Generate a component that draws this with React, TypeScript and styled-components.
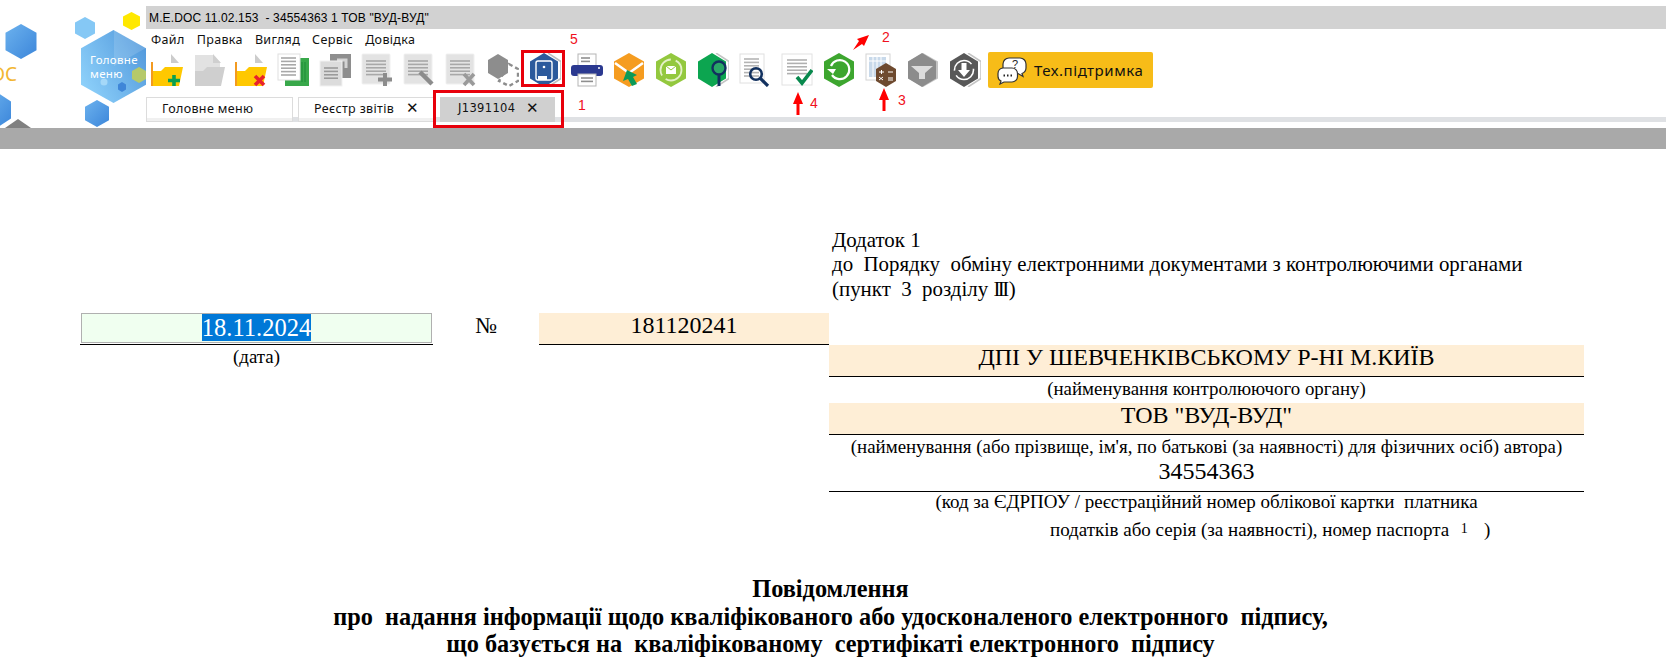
import React from "react";
import styled, { createGlobalStyle } from "styled-components";

const GlobalStyle = createGlobalStyle`
  html, body {
    margin: 0;
    padding: 0;
    background: #fff;
    overflow: hidden;
  }
`;

const Page = styled.div`
  width: 1666px;
  height: 658px;
  overflow: hidden;
  position: relative;
  font-family: "Liberation Serif", serif;
  color: #000;
`;

const Header = styled.header`
  display: flex;
  height: 128px;
`;

const LogoArea = styled.svg`
  width: 146px;
  height: 128px;
  flex: none;
`;

const Shell = styled.div`
  flex: 1;
  padding-top: 6px;
  position: relative;
`;

const TitleBar = styled.div`
  height: 23px;
  background: #d2d2d2;
  padding-left: 3px;
  font: 12px/24px "Liberation Sans", sans-serif;
  letter-spacing: 0.14px;
  white-space: pre;
`;

const MenuBar = styled.nav`
  display: flex;
  gap: 12px;
  height: 23px;
  padding-left: 5px;
  font: 12.5px/21px "Noto Sans", sans-serif;
  letter-spacing: 0.35px;
  color: #111;
`;

const Toolbar = styled.div`
  display: flex;
  align-items: center;
  height: 36px;
  padding-left: 5px;
  gap: 10px;
`;

const ToolIcon = styled.svg`
  display: block;
  width: 32px;
  height: 34px;
  flex: none;
`;

const MarkedSlot = styled.div`
  position: relative;
  flex: none;

  &::after {
    content: "";
    position: absolute;
    left: -8px;
    right: -4px;
    top: -3px;
    bottom: 0;
    border: 3px solid #e8000b;
  }
`;

const SupportButton = styled.button`
  display: flex;
  align-items: center;
  gap: 7px;
  width: 165px;
  height: 36px;
  margin-left: -3px;
  padding: 0 0 0 9px;
  border: 0;
  border-radius: 2px;
  background: #f7bc18;
  font: 15px "Noto Sans", sans-serif;
  letter-spacing: 0.55px;
  color: #111;
`;

const TabRow = styled.div`
  display: flex;
  height: 25px;
  margin-top: 9px;
  background: linear-gradient(#fff 20px, #dfe1e4 20px);
`;

const Tab = styled.div<{ $width: number; $pad: number }>`
  display: flex;
  align-items: center;
  box-sizing: border-box;
  width: ${(p) => p.$width}px;
  margin-right: 5px;
  padding: 0 0 3px ${(p) => p.$pad}px;
  border: 1px solid #dcdcdc;
  background: linear-gradient(#fff 20px, #f0f0f0 20px);
  font: 12.5px "Noto Sans", sans-serif;
  letter-spacing: 0.35px;
  color: #111;
`;

const ActiveTab = styled(Tab)`
  position: relative;
  margin-left: 1px;
  border-color: #d0d0d0;
  background: #d0d0d0;
  font: 11.5px "DejaVu Sans", sans-serif;

  &::after {
    content: "";
    position: absolute;
    left: -8px;
    right: -10px;
    top: -8px;
    bottom: -7px;
    border: 3px solid #e8000b;
  }
`;

const TabClose = styled.span<{ $gap: number }>`
  margin-left: ${(p) => p.$gap}px;
  font: 15px "Liberation Sans", sans-serif;
`;

const Note = styled.span<{ $x: number; $y: number }>`
  position: absolute;
  left: ${(p) => p.$x}px;
  top: ${(p) => p.$y}px;
  font: 14px "Liberation Sans", sans-serif;
  color: #f01020;
`;

const Arrow = styled.svg<{ $x: number; $y: number }>`
  position: absolute;
  left: ${(p) => p.$x}px;
  top: ${(p) => p.$y}px;
`;

const GrayBand = styled.div`
  height: 21px;
  background: #a9a9a9;
`;

const Sheet = styled.main`
  padding: 79px 0 0 80px;
`;

const Annex = styled.div`
  margin-left: 752px;
  height: 85px;
  font-size: 20.9px;
  line-height: 24.4px;
  white-space: pre;
`;

const Roman = styled.span`
  letter-spacing: -2.5px;
  margin-right: 2px;
`;

const FormGrid = styled.div`
  display: grid;
  grid-template-columns: 353px 106px 290px 755px;
  grid-template-rows: 32px auto;
`;

const DateCell = styled.div`
  box-sizing: border-box;
  height: 32px;
  border-bottom: 1px solid #000;
  padding: 0 1px 1px;
`;

const DateInput = styled.div`
  box-sizing: border-box;
  height: 30px;
  border: 1px solid #b0b0b0;
  background: #f0fff0;
  text-align: center;
  font-size: 24.5px;
  line-height: 27px;
`;

const Selected = styled.span`
  display: inline-block;
  background: #0078d7;
  color: #fff;
`;

const NumberSign = styled.div`
  text-align: center;
  font-size: 23px;
  line-height: 26px;
`;

const FilledValue = styled.div`
  box-sizing: border-box;
  height: 32px;
  border-bottom: 1px solid #000;
  background: #feeed6;
  text-align: center;
  font-size: 24px;
  line-height: 24px;
`;

const BlankValue = styled(FilledValue)`
  height: 31px;
  background: #fff;
  line-height: 20px;
`;

const Caption = styled.div`
  text-align: center;
  font-size: 18.9px;
  line-height: 24px;
  white-space: pre;
`;

const Authority = styled.div`
  grid-column: 4;
`;

const SmallCaption = styled(Caption)`
  height: 26px;
  line-height: 23px;
`;

const CodeCaption = styled(Caption)`
  font-size: 19px;
  line-height: 20px;
`;

const PassportLine = styled(Caption)`
  margin-top: 5px;
  padding-left: 221px;
  text-align: left;
  font-size: 19px;
`;

const Footnote = styled.span`
  font-size: 14px;
  vertical-align: 3px;
  margin: 0 2px;
`;

const Heading = styled.h1`
  margin: 33px 0 0 -80px;
  width: 1666px;
  padding-right: 5px;
  box-sizing: border-box;
  text-align: center;
  font-size: 24.3px;
  font-weight: bold;
  line-height: 27.5px;
  white-space: pre;
`;

const Hex = ({ fill, points = "16,0 31,8.5 31,25.5 16,34 1,25.5 1,8.5" }: { fill: string; points?: string }) => (
  <polygon points={points} fill={fill} />
);

const HexShade = () => <polyline points="19,0 32,8.5 32,25.5 19,34" fill="none" stroke="#c4c4c4" strokeWidth="1.5" />;

const DocLines = ({ x, y, w, n, color = "#a8a8a8" }: { x: number; y: number; w: number; n: number; color?: string }) => (
  <g stroke={color} strokeWidth="1.6">
    {Array.from({ length: n }).map((_, i) => (
      <line key={i} x1={x} x2={x + w} y1={y + i * 3.4} y2={y + i * 3.4} />
    ))}
  </g>
);

const FolderIcon = ({ mark, muted }: { mark?: "plus" | "cross"; muted?: boolean }) => (
  <ToolIcon viewBox="0 0 32 34">
    <polygon points="2,2 20,2 27,9 27,20 2,20" fill={muted ? "#e2e2e2" : "#fff"} />
    <polygon points="20,1 28,10 20,10" fill={muted ? "#cfcfcf" : "#cccccc"} />
    {!muted && <rect x="0" y="9" width="2" height="24" fill="#f39a20" />}
    <polygon
      points="2,33 2,18 10,18 14,14 32,14 28,33"
      fill={muted ? "#cfcfcf" : "#ffc800"}
    />
    {mark === "plus" && <path d="M23 22v11M17 27.5h12" stroke="#0aa04f" strokeWidth="3.6" />}
    {mark === "cross" && <path d="M20 23l9 9M29 23l-9 9" stroke="#e8222c" strokeWidth="3.6" />}
  </ToolIcon>
);

const SheetsIcon = () => (
  <ToolIcon viewBox="0 0 32 34">
    <rect x="8" y="5" width="24" height="28" fill="#38a84a" />
    <rect x="1" y="1" width="22" height="26" fill="#fff" stroke="#e0e0e0" />
    <DocLines x={4} y={5} w={15} n={6} />
    <path d="M25 9v20M28 9v20" stroke="#1d8a36" strokeWidth="1" />
  </ToolIcon>
);

const CopyIcon = () => (
  <ToolIcon viewBox="0 0 32 34">
    <rect x="11" y="1" width="21" height="24" fill="#8e8e8e" />
    <path d="M18 7h9v8" fill="none" stroke="#d4d4d4" strokeWidth="3" />
    <rect x="1" y="8" width="22" height="25" fill="#dcdcdc" stroke="#f2f2f2" />
    <DocLines x={5} y={15} w={14} n={4} color="#9a9a9a" />
  </ToolIcon>
);

const DocIcon = ({ mark }: { mark: "plus" | "pen" | "cross" }) => (
  <ToolIcon viewBox="0 0 32 34">
    <rect x="1" y="1" width="28" height="30" rx="1" fill="#e3e3e3" stroke="#f0f0f0" />
    <DocLines x={5} y={8} w={20} n={5} />
    {mark === "plus" && <path d="M24 20v13M17 26.5h14" stroke="#8c8c8c" strokeWidth="4" />}
    {mark === "pen" && <path d="M17 19l12 12" stroke="#8c8c8c" strokeWidth="4.5" />}
    {mark === "cross" && <path d="M19 21l10 11M29 21l-10 11" stroke="#9a9a9a" strokeWidth="3.6" />}
  </ToolIcon>
);

const ChainIcon = () => (
  <ToolIcon viewBox="0 0 32 34">
    <polygon points="11,1 21,7 21,20 11,26 1,20 1,7" fill="#8d8d8d" />
    <polygon points="22,11 31,16 31,28 22,33 12,28" fill="none" stroke="#8d8d8d" strokeWidth="2.4" strokeDasharray="4 3" />
  </ToolIcon>
);

const SaveIcon = () => (
  <ToolIcon viewBox="0 0 32 34">
    <polyline points="19,0 32,8.5 32,25.5 19,34" fill="none" stroke="#bdbdbd" strokeWidth="1.5" />
    <polygon points="15,0 29,8.5 29,25.5 15,34 1,25.5 1,8.5" fill="#2c5a9c" />
    <rect x="7" y="8" width="16" height="19" rx="2" fill="none" stroke="#fff" strokeWidth="1.4" />
    <circle cx="15" cy="14" r="1.3" fill="#fff" />
    <rect x="9" y="23" width="9" height="4" fill="#fff" />
  </ToolIcon>
);

const PrinterIcon = () => (
  <ToolIcon viewBox="0 0 32 34">
    <rect x="7" y="1" width="18" height="12" fill="#fff" stroke="#b5b5b5" />
    <DocLines x={10} y={5} w={9} n={2} color="#8f8f8f" />
    <rect x="0" y="12" width="32" height="11" rx="3" fill="#2b3990" />
    <circle cx="28" cy="15" r="1" fill="#fff" />
    <rect x="7" y="21" width="18" height="12" fill="#fff" stroke="#b5b5b5" />
    <DocLines x={10} y={25} w={12} n={2} color="#8f8f8f" />
  </ToolIcon>
);

const SendMailIcon = () => (
  <ToolIcon viewBox="0 0 32 34">
    <Hex fill="#f59c20" />
    <polyline points="2,10 16,20 30,10" fill="none" stroke="#fff" strokeWidth="2.6" />
    <polygon points="14,17 24,22 20,24 24,31 19,33 15,26 10,28" fill="#0b9a58" />
  </ToolIcon>
);

const ReceiptIcon = () => (
  <ToolIcon viewBox="0 0 32 34">
    <Hex fill="#93c83e" />
    <circle cx="16" cy="17" r="10.5" fill="none" stroke="#e4f1c8" strokeWidth="1.8" strokeDasharray="22 5" />
    <rect x="11" y="13" width="10" height="8" fill="#fff" />
    <polyline points="11,13 16,17 21,13" fill="none" stroke="#93c83e" strokeWidth="1" />
  </ToolIcon>
);

const HexSearchIcon = () => (
  <ToolIcon viewBox="0 0 32 34">
    <HexShade />
    <polygon points="15,0 29,8.5 29,25.5 15,34 1,25.5 1,8.5" fill="#0ca550" />
    <circle cx="22" cy="15" r="6.5" fill="#29a866" stroke="#12315f" strokeWidth="2.4" />
    <path d="M22 21.5V33" stroke="#12315f" strokeWidth="3" />
  </ToolIcon>
);

const DocSearchIcon = () => (
  <ToolIcon viewBox="0 0 32 34">
    <rect x="1" y="1" width="24" height="29" fill="#fff" stroke="#e0e0e0" />
    <DocLines x={5} y={6} w={15} n={6} color="#b4b4b4" />
    <circle cx="17" cy="21" r="5.8" fill="none" stroke="#12315f" strokeWidth="2.6" />
    <path d="M21 25l8 8" stroke="#12315f" strokeWidth="3.2" />
  </ToolIcon>
);

const CheckedDocIcon = () => (
  <ToolIcon viewBox="0 0 32 34">
    <rect x="1" y="1" width="30" height="31" fill="#fff" stroke="#e2e2e2" />
    <DocLines x={6} y={7} w={20} n={5} color="#b0b0b0" />
    <polyline points="16,24 21,30 31,17" fill="none" stroke="#08894d" strokeWidth="3.6" />
  </ToolIcon>
);

const RefreshIcon = () => (
  <ToolIcon viewBox="0 0 32 34">
    <Hex fill="#3da62f" />
    <path d="M8 13a9.5 9.5 0 1 1 1 9" fill="none" stroke="#fff" strokeWidth="2.2" />
    <path d="M4 16h9l-3 5z" fill="#fff" />
  </ToolIcon>
);

const CalcTableIcon = () => (
  <ToolIcon viewBox="0 0 32 34">
    <rect x="1" y="1" width="24" height="26" fill="#fff" stroke="#d4d4d4" />
    <rect x="4" y="4" width="17" height="20" fill="#c8d9ea" />
    <path d="M8 4v20M12 4v20M16 4v20M4 8h17" stroke="#fff" />
    <polygon points="21,10 31,16 31,28 21,34 11,28 11,16" fill="#6e4a2f" />
    <path d="M14 19h5M16.500 17v4M23 19h5M14 27l4-3M18 27l-4-3M23 25h5M23 27h5" stroke="#fff" strokeWidth="1" />
  </ToolIcon>
);

const FunnelIcon = () => (
  <ToolIcon viewBox="0 0 32 34">
    <Hex fill="#c4c4c4" />
    <polygon points="15,0 29,8.5 29,25.5 15,34 1,25.5 1,8.5" fill="#8c8c8c" />
    <polygon points="4,13 26,13 18,20 18,26 12,26 12,20" fill="#dcdcdc" />
  </ToolIcon>
);

const DownloadIcon = () => (
  <ToolIcon viewBox="0 0 32 34">
    <HexShade />
    <polygon points="15,0 29,8.5 29,25.5 15,34 1,25.5 1,8.5" fill="#585858" />
    <circle cx="15" cy="17" r="9.5" fill="none" stroke="#fff" strokeWidth="1.6" strokeDasharray="24 5" />
    <path d="M12.500 10h5v7h3.500L15 24l-6-7h3.500z" fill="#fff" />
  </ToolIcon>
);

const ChatIcon = () => (
  <svg width="30" height="30" viewBox="0 0 30 30">
    <path d="M12 3h11a6 6 0 0 1 6 6v4a6 6 0 0 1-4 5.500l1 3-5-3h-9a6 6 0 0 1-6-6V9a6 6 0 0 1 6-6z" fill="#fff" stroke="#333" strokeWidth="1.2" />
    <path d="M6 13h9a5.500 5.500 0 0 1 5.500 5.500v3A5.500 5.500 0 0 1 15 27H7l-4 2 1-3a5.500 5.500 0 0 1-3-5v-2.500A5.500 5.500 0 0 1 6 13z" fill="#fff" stroke="#333" strokeWidth="1.2" />
    <text x="15" y="13" fontFamily="Liberation Sans, sans-serif" fontSize="11" fill="#222">?</text>
    <path d="M6.500 20.500h1.500M10 20.500h1.500M13.500 20.500H15" stroke="#222" strokeWidth="1.8" />
  </svg>
);

const LogoHex = ({ cx, cy, rx, ry, fill, opacity }: { cx: number; cy: number; rx: number; ry: number; fill: string; opacity?: number }) => (
  <polygon
    points={`${cx},${cy - ry} ${cx + rx},${cy - ry / 2} ${cx + rx},${cy + ry / 2} ${cx},${cy + ry} ${cx - rx},${cy + ry / 2} ${cx - rx},${cy - ry / 2}`}
    fill={fill}
    opacity={opacity}
  />
);

const Logo = () => (
  <LogoArea viewBox="0 0 146 128">
    <defs>
      <linearGradient id="logoMain" x1="0" y1="0.8" x2="1" y2="0.2">
        <stop offset="0" stopColor="#8fd2fb" />
        <stop offset="1" stopColor="#5299dc" />
      </linearGradient>
      <linearGradient id="logoDeep" x1="0" y1="0" x2="1" y2="1">
        <stop offset="0" stopColor="#6cb2ee" />
        <stop offset="1" stopColor="#3c86da" />
      </linearGradient>
    </defs>
    <LogoHex cx={21} cy={41.500} rx={15.500} ry={17.500} fill="url(#logoDeep)" />
    <text x="17" y="81" textAnchor="end" fontFamily="Noto Sans, sans-serif" fontSize="19" fill="#f2b632">DOC</text>
    <LogoHex cx={-2} cy={110} rx={13} ry={17} fill="url(#logoDeep)" />
    <polygon points="5,128 18,119 31,128" fill="#808080" />
    <LogoHex cx={85} cy={28} rx={10} ry={11} fill="#85c8f5" />
    <LogoHex cx={131.500} cy={21} rx={8.500} ry={9} fill="#ffe800" />
    <LogoHex cx={113.500} cy={66.500} rx={32.500} ry={36.500} fill="url(#logoMain)" />
    <polygon points="114,30 146,48 114,66" fill="#fff" opacity="0.14" />
    <LogoHex cx={139} cy={75} rx={7} ry={8} fill="#b5c96a" />
    <LogoHex cx={122} cy={87} rx={4} ry={5} fill="#3f86d8" />
    <circle cx="104" cy="82" r="3.500" fill="#a5d8f8" />
    <LogoHex cx={97} cy={113.500} rx={12} ry={13.500} fill="url(#logoDeep)" />
    <text x="90" y="64" fontFamily="Noto Sans, sans-serif" fontSize="11.500" letterSpacing="0.3" fill="#fff">Головне</text>
    <text x="90" y="78" fontFamily="Noto Sans, sans-serif" fontSize="11.500" letterSpacing="0.3" fill="#fff">меню</text>
  </LogoArea>
);

const menuItems = ["Файл", "Правка", "Вигляд", "Сервіс", "Довідка"];

const App = () => {
  return (
    <Page>
      <GlobalStyle />
      <Header>
        <Logo />
        <Shell>
          <TitleBar>M.E.DOC 11.02.153  - 34554363 1 ТОВ "ВУД-ВУД"</TitleBar>
          <MenuBar>
            {menuItems.map((item) => (
              <span key={item}>{item}</span>
            ))}
          </MenuBar>
          <Toolbar>
            <FolderIcon mark="plus" />
            <FolderIcon muted />
            <FolderIcon mark="cross" />
            <SheetsIcon />
            <CopyIcon />
            <DocIcon mark="plus" />
            <DocIcon mark="pen" />
            <DocIcon mark="cross" />
            <ChainIcon />
            <MarkedSlot>
              <SaveIcon />
            </MarkedSlot>
            <PrinterIcon />
            <SendMailIcon />
            <ReceiptIcon />
            <HexSearchIcon />
            <DocSearchIcon />
            <CheckedDocIcon />
            <RefreshIcon />
            <CalcTableIcon />
            <FunnelIcon />
            <DownloadIcon />
            <SupportButton>
              <ChatIcon />
              Тех.підтримка
            </SupportButton>
          </Toolbar>
          <TabRow>
            <Tab $width={147} $pad={15}>Головне меню</Tab>
            <Tab $width={136} $pad={15}>
              Реєстр звітів
              <TabClose $gap={12}>✕</TabClose>
            </Tab>
            <ActiveTab $width={115} $pad={17}>
              J1391104
              <TabClose $gap={11}>✕</TabClose>
            </ActiveTab>
          </TabRow>
          <Note $x={424} $y={31}>5</Note>
          <Note $x={432} $y={97}>1</Note>
          <Note $x={736} $y={29}>2</Note>
          <Note $x={752} $y={92}>3</Note>
          <Note $x={664} $y={95}>4</Note>
          <Arrow $x={707} $y={35} width="17" height="16" viewBox="0 0 17 16">
            <path d="M0 15l6-9-2-2 12-4-5 11-2-2z" fill="#f00" />
          </Arrow>
          <Arrow $x={733} $y={88} width="10" height="23" viewBox="0 0 10 23">
            <path d="M5 0l5 12H6.500v11h-3V12H0z" fill="#f00" />
          </Arrow>
          <Arrow $x={647} $y={92} width="10" height="23" viewBox="0 0 10 23">
            <path d="M5 0l5 12H6.500v11h-3V12H0z" fill="#f00" />
          </Arrow>
        </Shell>
      </Header>
      <GrayBand />
      <Sheet>
        <Annex>
          {"Додаток 1\nдо  Порядку  обміну електронними документами з контролюючими органами\n(пункт  3  розділу "}
          <Roman>ІІІ</Roman>)
        </Annex>
        <FormGrid>
          <DateCell>
            <DateInput>
              <Selected>18.11.2024</Selected>
            </DateInput>
          </DateCell>
          <NumberSign>№</NumberSign>
          <FilledValue>181120241</FilledValue>
          <div />
          <Caption>(дата)</Caption>
          <div />
          <div />
          <Authority>
            <FilledValue>ДПІ У ШЕВЧЕНКІВСЬКОМУ Р-НІ М.КИЇВ</FilledValue>
            <SmallCaption>(найменування контролюючого органу)</SmallCaption>
            <FilledValue>ТОВ "ВУД-ВУД"</FilledValue>
            <SmallCaption>(найменування (або прізвище, ім'я, по батькові (за наявності) для фізичних осіб) автора)</SmallCaption>
            <BlankValue>34554363</BlankValue>
            <CodeCaption>(код за ЄДРПОУ / реєстраційний номер облікової картки  платника</CodeCaption>
            <PassportLine>
              податків або серія (за наявності), номер паспорта  <Footnote>1</Footnote>   )
            </PassportLine>
          </Authority>
        </FormGrid>
        <Heading>
          {"Повідомлення\nпро  надання інформації щодо кваліфікованого або удосконаленого електронного  підпису,\nщо базується на  кваліфікованому  сертифікаті електронного  підпису"}
        </Heading>
      </Sheet>
    </Page>
  );
};

export default App;
